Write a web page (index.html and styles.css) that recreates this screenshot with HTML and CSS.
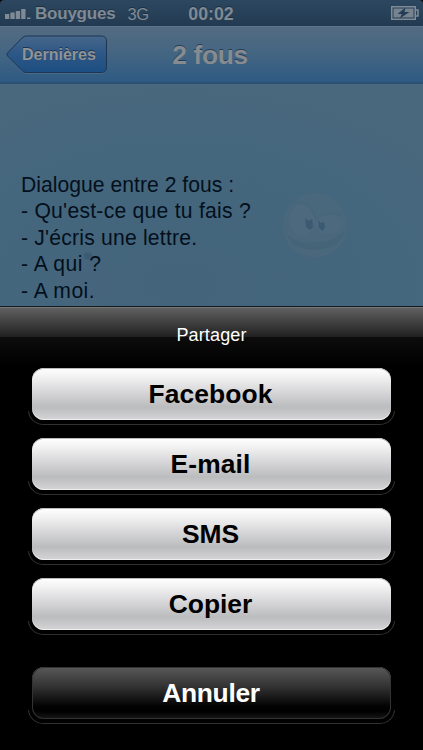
FILE: index.html
```html
<!DOCTYPE html>
<html lang="fr">
<head>
<meta charset="utf-8">
<title>2 fous</title>
<link rel="stylesheet" href="styles.css">
</head>
<body>
<main class="phone">
  <header class="status">
    <div class="carrier">
      <svg class="signal" width="26" height="12" viewBox="0 0 26 12"><path d="M0 6h4.300v5H0zM5.400 4.500h4.300V11H5.400zM10.800 3h4.300v8h-4.300zM16.200 1h4.300v10h-4.300zM22 9.500h3.500V11H22z"/></svg>
      <span class="operator">Bouygues</span>
      <span class="network">3G</span>
    </div>
    <time class="clock">00:02</time>
    <svg class="battery" width="28" height="14" viewBox="0 0 28 14"><path class="shell" d="M.75.75h23.500v12.500H.75zM25 4h2v6h-2"/><path class="charge" d="M2.500 2.500h20v9h-20z"/><path class="bolt" d="M14.500 1.500 6.500 8h4.300l-2 4.500L18.500 6h-5z"/></svg>
  </header>
  <nav class="navbar">
    <div class="back">
      <svg class="back-shape" width="102" height="40" viewBox="0 0 102 40">
        <defs>
          <linearGradient id="backFill" x1="0" y1="0" x2="0" y2="1"><stop offset="0" stop-color="#47668a"/><stop offset=".5" stop-color="#2c5786"/><stop offset="1" stop-color="#1d4e82"/></linearGradient>
        </defs>
        <path class="back-light" d="M20.500 2H95Q100 2 100 7V33.500Q100 38.500 95 38.500H20Q17.500 38.500 16 36.500L1.500 22Q.5 20.500 1.500 19L16 4Q18 2 20.500 2Z"/>
        <path class="back-body" d="M20.500 1H95Q100.500 1 100.500 6V32.500Q100.500 37.500 95 37.500H20Q17.500 37.500 16 35.500L1.500 21Q.5 19.500 1.500 18L16 3Q18 1 20.500 1Z"/>
      </svg>
      <span class="back-label">Dernières</span>
    </div>
    <h1 class="title">2 fous</h1>
  </nav>
  <section class="content">
    <div class="joke">
      <p>Dialogue entre 2 fous :</p>
      <p class="question">- Qu'est-ce que tu fais ?</p>
      <p class="answer">- J'écris une lettre.</p>
      <p class="short">- A qui ?</p>
      <p class="short">- A moi.</p>
    </div>
    <svg class="ghost" width="64" height="56" viewBox="0 0 64 56">
      <circle cx="32" cy="32" r="29" fill="#4d697c" opacity=".25"/>
      <ellipse cx="35" cy="6" rx="4" ry="3.500" fill="#36576d" opacity=".7"/>
    </svg>
    <svg class="smiley" width="66" height="69" viewBox="0 0 66 69">
      <circle cx="33" cy="34" r="32" fill="#4f697c" opacity=".5"/>
      <path d="M4 43Q19 55 33 51Q50 53 63 39Q61 47 55 53Q33 64 11 54Z" fill="#3f5f74" opacity=".4"/>
      <ellipse cx="20" cy="29" rx="13" ry="16" fill="#4e6a7d" opacity=".5"/>
      <ellipse cx="46" cy="33" rx="13" ry="11" fill="#4e6a7d" opacity=".5"/>
      <path d="M10 12Q27 7 34 28Q43 20 60 24" fill="none" stroke="#446377" stroke-width="2" opacity=".35"/>
      <path d="M23 27l4 3 3-2 1 8-3 3-4-3zM36 29l3 3 3-1 1 5-2 4-4-3z" fill="#385970" opacity=".9"/>
      <path d="M2 39Q7 65 31 66Q52 66 63 44" fill="none" stroke="#4d697c" stroke-width="2" opacity=".4"/>
    </svg>
  </section>
  <section class="sheet">
    <h2 class="sheet-title">Partager</h2>
    <button class="action facebook"><span>Facebook</span></button>
    <button class="action email"><span>E-mail</span></button>
    <button class="action sms"><span>SMS</span></button>
    <button class="action copy"><span>Copier</span></button>
    <button class="action cancel"><span>Annuler</span></button>
  </section>
</main>
</body>
</html>
```
FILE: styles.css
```css
* { box-sizing: border-box; }
body { margin: 0; background: #000; font-family: "Liberation Sans", Arial, sans-serif; }
.phone { width: 423px; height: 750px; display: flex; flex-direction: column; overflow: hidden; }
.status {
  height: 26px; flex: none; display: grid; grid-template-columns: 1fr auto 1fr; align-items: center;
  padding: 2px 5px 0; border-radius: 4px 4px 0 0;
  background: linear-gradient(#2c475f, #223b53); color: #808a94;
  font-size: 17px; font-weight: bold; text-shadow: 0 -1px #1b3045;
}
.carrier { display: flex; align-items: center; }
.signal { fill: #808a94; }
.operator { margin-left: 4px; letter-spacing: -.22px; }
.network { margin-left: 12px; font-weight: normal; font-size: 16.500px; letter-spacing: -.3px; }
.clock { font-size: 17.800px; margin-right: 1px; }
.battery { justify-self: end; margin-right: -1px; margin-top: -2px; }
.shell { fill: none; stroke: #818b95; stroke-width: 1.500; }
.charge { fill: #77838f; }
.bolt { fill: #243d55; }
.navbar {
  height: 58px; flex: none; display: grid; grid-template-columns: 102px 1fr 102px; align-items: center;
  padding: 0 6px 0; border-top: 1px solid #5d758a; border-bottom: 2px solid #2a5072;
  background: linear-gradient(#536b81, #456682 45%, #2f5a83);
}
.back { display: grid; align-items: center; }
.back > * { grid-area: 1 / 1; }
.back-body { fill: url(#backFill); stroke: #1c3754; }
.back-light { fill: none; stroke: #57738c; opacity: .6; }
.back-label { padding-left: 16px; color: #919394; font-size: 16px; font-weight: bold; text-shadow: 0 -1px #1d3451; }
.title { margin: 1px 0 0; text-align: center; color: #868b90; font-size: 26.400px; letter-spacing: -.35px; line-height: 30px; text-indent: -3px; text-shadow: 0 -1.500px #253f59; }
.content {
  height: 222px; flex: none; display: flex; align-items: flex-start; position: relative; padding: 88px 0 0 21px;
  background: radial-gradient(ellipse 330px 200px at 180px 200px, #43647b 0, #45677e 70%, #49677d 100%);
}
.joke { position: relative; z-index: 1; color: #03101c; font-size: 21.150px; line-height: 26.400px; white-space: nowrap; }
.joke p { margin: 0; letter-spacing: .02px; }
.joke .question { letter-spacing: .25px; }
.joke .answer { letter-spacing: .2px; }
.joke .short { letter-spacing: .45px; }
.smiley { position: absolute; left: 282px; top: 107px; }
.ghost { position: absolute; left: 53px; top: 166px; }
.sheet {
  flex: 1; display: flex; flex-direction: column; align-items: center;
  border-top: 1px solid #101a20; box-shadow: inset 0 1px #777;
  background: linear-gradient(#626262 0, #202020 30px, #0c0c0c 30px, #000 60px);
}
.sheet-title { margin: 18px 0 22px; color: #fff; font-size: 18px; font-weight: normal; letter-spacing: .15px; line-height: 21px; }
.action {
  position: relative; width: 359px; height: 52px; margin: 0 0 18px; padding: 0; flex: none;
  border: 0; border-radius: 12px; font: bold 26.400px/52px "Liberation Sans", Arial, sans-serif; color: #000;
  background: linear-gradient(#fff 0, #f1f1f2 18%, #d3d3d5 50%, #bbbcbe 75%, #d5d5d7 100%);
  box-shadow: inset 0 1px #bbb, inset 0 -1px #eee;
}
.action::after {
  content: ""; position: absolute; inset: -4px -4px -5px; border: 1px solid #303030; border-top: 0; border-radius: 15px;
  clip-path: inset(calc(100% - 14px) 0 0);
}
.action span { display: block; margin-left: -2px; }
.facebook { letter-spacing: .1px; }
.email { letter-spacing: .1px; }
.cancel {
  margin-top: 19px; color: #fff;
  background: linear-gradient(#595959, #323232 38%, #030303 75%, #000 85%, #181818);
  box-shadow: inset 0 0 0 1px #333, inset 0 1px #666;
}
.cancel span { margin-left: -1px; letter-spacing: -.3px; }
```
